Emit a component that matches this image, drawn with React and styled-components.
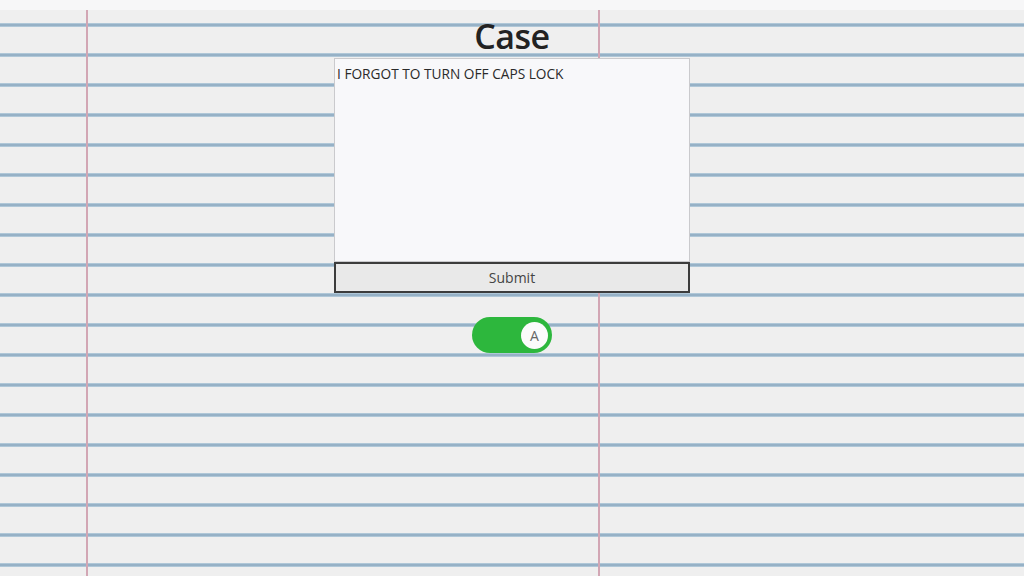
import { useState } from "react";
import styled, { createGlobalStyle } from "styled-components";

const GlobalStyle = createGlobalStyle`
  html, body {
    margin: 0;
    padding: 0;
    background: #f7f7f8;
    font-family: "Open Sans", "Noto Sans", sans-serif;
  }
`;

const Page = styled.div`
  padding-top: 10px;
  min-height: 576px;
  box-sizing: border-box;
`;

// ruled notebook paper: two red margins + blue lines every 30px
const Paper = styled.main`
  min-height: 566px;
  display: flex;
  flex-direction: column;
  align-items: center;
  background-color: #efefef;
  background-image:
    linear-gradient(to right, transparent 86px, #d2a6b4 86px, #d2a6b4 88px, transparent 88px),
    linear-gradient(to right, transparent 598px, #d2a6b4 598px, #d2a6b4 600px, transparent 600px),
    repeating-linear-gradient(
      to bottom,
      transparent 0px,
      transparent 13px,
      #c9dde9 13px,
      #96b1c6 14px,
      #96b1c6 16px,
      #c9dde9 17px,
      transparent 17px,
      transparent 30px
    );
`;

const Title = styled.h1`
  box-sizing: border-box;
  margin: 0;
  height: 48px;
  padding-top: 2px;
  line-height: 48px;
  font-size: 34px;
  font-weight: 600;
  color: #222;
  letter-spacing: -0.5px;
`;

const Form = styled.form`
  width: 356px;
  display: flex;
  flex-direction: column;
`;

const TextArea = styled.textarea`
  box-sizing: border-box;
  height: 204px;
  width: 100%;
  resize: none;
  margin: 0;
  padding: 5px 2px;
  border: 1px solid #cacacd;
  background: #f8f8fa;
  font-family: "Open Sans", "Noto Sans", sans-serif;
  font-size: 13.7px;
  color: #2a2a2a;
  outline: none;
`;

const SubmitButton = styled.button`
  box-sizing: border-box;
  height: 31px;
  width: 100%;
  margin: 0;
  border: 2px solid #3c3c3c;
  background: #e9e9e9;
  font-family: "Open Sans", "Noto Sans", sans-serif;
  font-size: 14px;
  color: #444;
  cursor: pointer;
`;

const Toggle = styled.button`
  box-sizing: border-box;
  margin-top: 24px;
  width: 80px;
  height: 36px;
  padding: 0 4px;
  border: none;
  border-radius: 18px;
  background: ${(p) => (p.$on ? "#2db73d" : "#b8b8b8")};
  display: flex;
  align-items: center;
  justify-content: ${(p) => (p.$on ? "flex-end" : "flex-start")};
  cursor: pointer;
`;

const Knob = styled.span`
  width: 27px;
  height: 27px;
  border-radius: 50%;
  background: #fbfbfb;
  display: flex;
  align-items: center;
  justify-content: center;
  font-family: "Open Sans", "Noto Sans", sans-serif;
  font-size: 14px;
  font-weight: 500;
  color: #666;
`;

export default function App() {
  const [upper, setUpper] = useState(true);
  const [text, setText] = useState("I FORGOT TO TURN OFF CAPS LOCK");

  return (
    <>
      <GlobalStyle />
      <Page>
        <Paper>
          <Title>Case</Title>
          <Form onSubmit={(e) => e.preventDefault()}>
            <TextArea value={text} onChange={(e) => setText(e.target.value)} />
            <SubmitButton type="submit">Submit</SubmitButton>
          </Form>
          <Toggle $on={upper} onClick={() => setUpper(!upper)}>
            <Knob>{upper ? "A" : "a"}</Knob>
          </Toggle>
        </Paper>
      </Page>
    </>
  );
}
